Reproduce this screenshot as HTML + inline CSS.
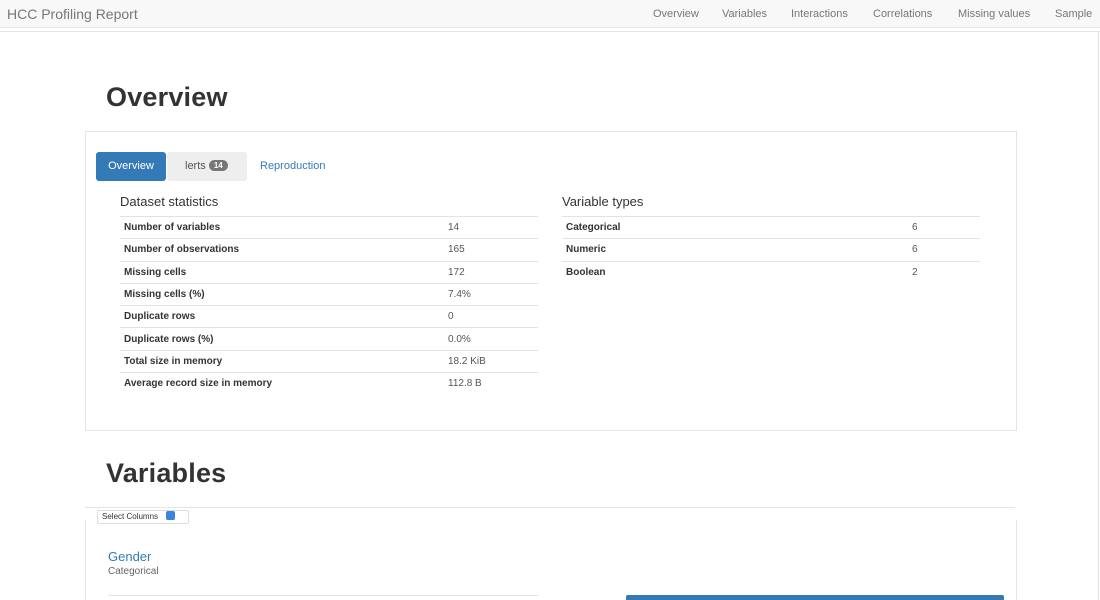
<!DOCTYPE html>
<html><head><style>
html,body{margin:0;width:1100px;height:600px;overflow:hidden}
body{background:#fff;font-family:"Liberation Sans",sans-serif;color:#333;position:relative}
.a{position:absolute}
.nav{left:0;top:0;width:1100px;height:27px;background:#f8f8f8;border-bottom:1px solid #e7e7e7}
.brand{left:7px;top:6px;font-size:14px;color:#777}
.nl{top:8px;font-size:11px;color:#777}
h1{position:absolute;margin:0;font-weight:bold;font-size:27px;color:#333;letter-spacing:0.2px}
.box{border:1px solid #e5e5e5;background:#fff}
table{position:absolute;border-collapse:collapse;font-size:10px;table-layout:fixed}
td{height:21.3px;border-top:1px solid #e3e3e3;padding:0 4px;vertical-align:middle}
td.k{font-weight:bold;color:#333}
td.v{color:#555;padding-left:0}
</style></head><body>
<div class="a nav"></div>
<div class="a" style="left:0;top:31px;width:1100px;height:1px;background:#e5e5e5"></div>
<div class="a brand">HCC Profiling Report</div>
<div class="a nl" style="left:653px">Overview</div>
<div class="a nl" style="left:722px">Variables</div>
<div class="a nl" style="left:791px">Interactions</div>
<div class="a nl" style="left:873px">Correlations</div>
<div class="a nl" style="left:958px">Missing values</div>
<div class="a nl" style="left:1055px">Sample</div>
<div class="a" style="left:1098px;top:32px;width:1px;height:568px;background:#ddd"></div>

<h1 style="left:106px;top:82px">Overview</h1>
<div class="a box" style="left:85px;top:131px;width:930px;height:298px"></div>
<div class="a" style="left:96px;top:152px;width:70px;height:29px;background:#337ab7;border-radius:3px;color:#fff;font-size:11px;line-height:29px;text-align:center">Overview</div>
<div class="a" style="left:167px;top:152px;width:80px;height:29px;background:#eee;border-radius:3px;font-size:11px;line-height:29px;color:#555"><span style="margin-left:18px">lerts</span> <span style="display:inline-block;background:#777;color:#fff;border-radius:8px;font-size:8px;font-weight:bold;padding:0 5px;line-height:11px;vertical-align:1px">14</span></div>
<div class="a" style="left:260px;top:160px;font-size:11px;color:#337ab7">Reproduction</div>
<div class="a" style="left:120px;top:194px;font-size:13px;color:#333">Dataset statistics</div>
<div class="a" style="left:562px;top:194px;font-size:13px;color:#333">Variable types</div>
<table style="left:120px;top:216px;width:418px">
<colgroup><col style="width:328px"><col style="width:90px"></colgroup>
<tr><td class="k">Number of variables</td><td class="v">14</td></tr>
<tr><td class="k">Number of observations</td><td class="v">165</td></tr>
<tr><td class="k">Missing cells</td><td class="v">172</td></tr>
<tr><td class="k">Missing cells (%)</td><td class="v">7.4%</td></tr>
<tr><td class="k">Duplicate rows</td><td class="v">0</td></tr>
<tr><td class="k">Duplicate rows (%)</td><td class="v">0.0%</td></tr>
<tr><td class="k">Total size in memory</td><td class="v">18.2 KiB</td></tr>
<tr><td class="k">Average record size in memory</td><td class="v">112.8 B</td></tr>
</table>
<table style="left:562px;top:216px;width:418px">
<colgroup><col style="width:350px"><col style="width:68px"></colgroup>
<tr><td class="k">Categorical</td><td class="v">6</td></tr>
<tr><td class="k">Numeric</td><td class="v">6</td></tr>
<tr><td class="k">Boolean</td><td class="v">2</td></tr>
</table>

<h1 style="left:106px;top:458px">Variables</h1>
<div class="a" style="left:85px;top:507px;width:930px;height:1px;background:#e5e5e5"></div>
<div class="a box" style="left:85px;top:520px;width:930px;height:100px;border-top:none"></div>
<div class="a" style="left:97px;top:510px;width:86px;height:12px;border:1px solid #ddd;border-radius:2px;background:#fff;font-size:8px;line-height:12px;color:#333;padding-left:4px">Select Columns <span style="display:inline-block;width:9px;height:9px;background:#3a84e0;border-radius:2px;vertical-align:-1px;margin-left:6px"></span></div>
<div class="a" style="left:108px;top:549px;font-size:13px;color:#337ab7">Gender</div>
<div class="a" style="left:108px;top:566px;font-size:10px;color:#666">Categorical</div>
<div class="a" style="left:108px;top:595px;width:430px;height:1px;background:#e3e3e3"></div>
<div class="a" style="left:626px;top:595px;width:378px;height:8px;background:#337ab7;border-radius:2px"></div>
</body></html>
